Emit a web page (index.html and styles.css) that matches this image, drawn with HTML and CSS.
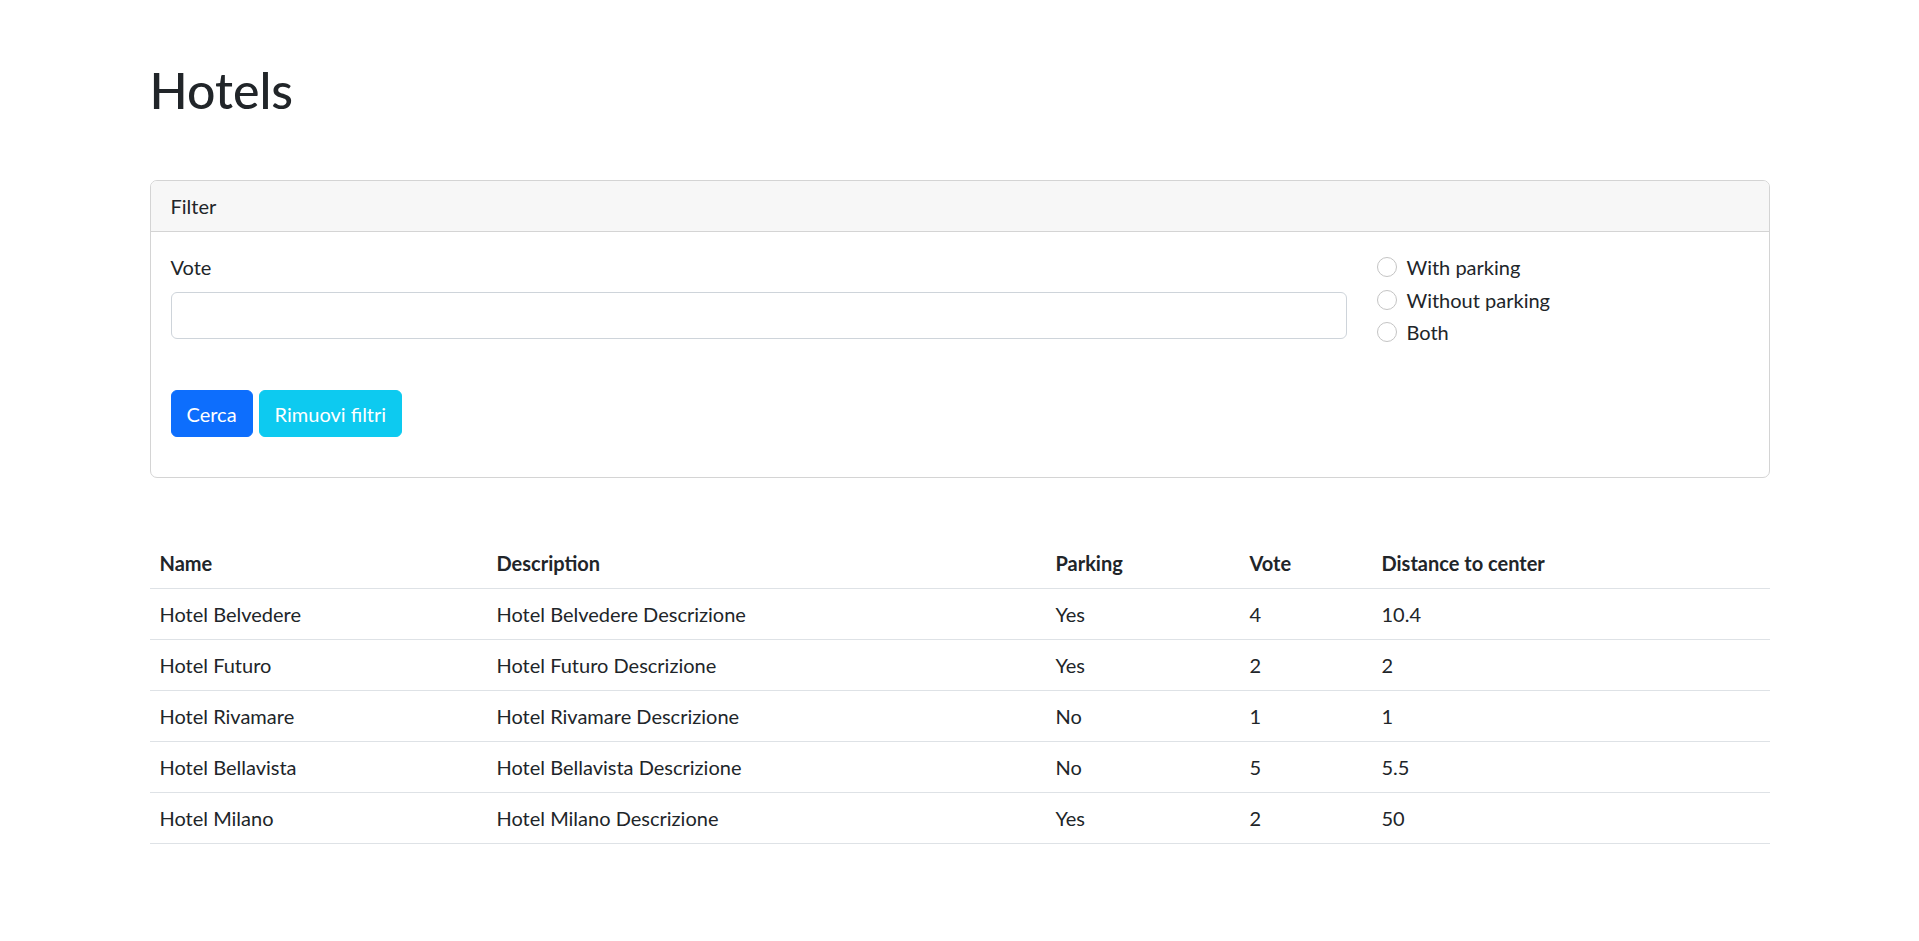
FILE: index.html
```html
<!DOCTYPE html>
<html lang="it">
<head>
<meta charset="utf-8">
<title>Hotels</title>
<link rel="stylesheet" href="styles.css">
</head>
<body>
<div class="container">
  <h1 class="title">Hotels</h1>

  <div class="card">
    <div class="card-header">Filter</div>
    <div class="card-body">
      <form class="filter-form">
        <div class="filter-row">
          <div class="field">
            <label class="field-label" for="vote">Vote</label>
            <input class="field-input" id="vote" type="text">
          </div>
          <div class="radios">
            <label class="radio-item"><span class="radio-circle"></span>With parking</label>
            <label class="radio-item"><span class="radio-circle"></span>Without parking</label>
            <label class="radio-item"><span class="radio-circle"></span>Both</label>
          </div>
        </div>
        <div class="actions">
          <button type="button" class="btn btn-primary">Cerca</button>
          <button type="button" class="btn btn-info">Rimuovi filtri</button>
        </div>
      </form>
    </div>
  </div>

  <table class="hotels">
    <colgroup>
      <col class="c-name"><col class="c-desc"><col class="c-park"><col class="c-vote"><col class="c-dist">
    </colgroup>
    <thead>
      <tr><th>Name</th><th>Description</th><th>Parking</th><th>Vote</th><th>Distance to center</th></tr>
    </thead>
    <tbody>
      <tr><td>Hotel Belvedere</td><td>Hotel Belvedere Descrizione</td><td>Yes</td><td>4</td><td>10.4</td></tr>
      <tr><td>Hotel Futuro</td><td>Hotel Futuro Descrizione</td><td>Yes</td><td>2</td><td>2</td></tr>
      <tr><td>Hotel Rivamare</td><td>Hotel Rivamare Descrizione</td><td>No</td><td>1</td><td>1</td></tr>
      <tr><td>Hotel Bellavista</td><td>Hotel Bellavista Descrizione</td><td>No</td><td>5</td><td>5.5</td></tr>
      <tr><td>Hotel Milano</td><td>Hotel Milano Descrizione</td><td>Yes</td><td>2</td><td>50</td></tr>
    </tbody>
  </table>
</div>
</body>
</html>
```
FILE: styles.css
```css
* { box-sizing: border-box; }

body {
  margin: 0;
  font-family: "Lato", "Roboto", sans-serif;
  font-size: 20px;
  line-height: 1.5;
  color: #212529;
  background: #fff;
}

.container {
  max-width: 1650px;
  margin: 0 auto;
  padding: 60px 15px 0;
}

.title {
  margin: 0 0 60px;
  font-size: 50px;
  font-weight: 500;
  line-height: 1.2;
}

.card {
  border: 1px solid #d4d4d4;
  border-radius: 7px;
  background: #fff;
}

.card-header {
  padding: 10px 20px;
  background: #f7f7f7;
  border-bottom: 1px solid #d4d4d4;
  border-radius: 6px 6px 0 0;
}

.card-body {
  padding: 20px;
}

.filter-row {
  display: grid;
  grid-template-columns: calc(75% - 7.5px) 1fr;
  column-gap: 30px;
  margin-bottom: 40.5px;
}

.field-label {
  display: block;
  margin-bottom: 10px;
}

.field-input {
  display: block;
  width: 100%;
  height: 47px;
  padding: 7.5px 15px;
  font: inherit;
  color: #212529;
  border: 1px solid #ced4da;
  border-radius: 6px;
  background: #fff;
}

.radios {
  display: flex;
  flex-direction: column;
}

.radio-item {
  display: flex;
  align-items: flex-start;
  min-height: 30px;
  margin-bottom: 2.5px;
}

.radio-circle {
  flex: none;
  width: 20px;
  height: 20px;
  margin-top: 5px;
  margin-right: 10px;
  border: 1px solid #c4c4c4;
  border-radius: 50%;
  background: #fff;
}

.actions {
  display: flex;
  gap: 6px;
  margin-bottom: 20px;
}

.btn {
  padding: 7.5px 15px;
  font: inherit;
  line-height: 30px;
  color: #fff;
  border: 1px solid transparent;
  border-radius: 6px;
  cursor: pointer;
}

.btn-primary {
  background: #0d6efd;
  border-color: #0d6efd;
}

.btn-info {
  background: #0dcaf0;
  border-color: #0dcaf0;
}

.hotels {
  width: 100%;
  margin-top: 60px;
  border-collapse: collapse;
  table-layout: fixed;
}

.c-name { width: 337px; }
.c-desc { width: 559px; }
.c-park { width: 194px; }
.c-vote { width: 132px; }

.hotels th,
.hotels td {
  padding: 10px;
  text-align: left;
  border-bottom: 1px solid #dee2e6;
  vertical-align: top;
}

.hotels th {
  font-weight: 700;
}
```
